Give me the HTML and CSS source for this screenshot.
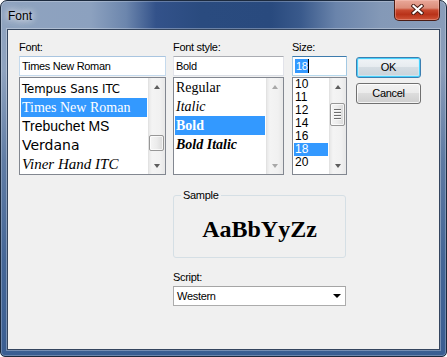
FILE: index.html
```html
<!DOCTYPE html>
<html>
<head>
<meta charset="utf-8">
<link rel="stylesheet" href="styles.css">
</head>
<body>
<div class="window">
  <div class="titlebar">
    <span class="title">Font</span>
    <div class="close">
      <svg width="13" height="11" viewBox="0 0 13 11"><path d="M2.5 2 L10.5 9 M10.5 2 L2.5 9" stroke="#4a1d15" stroke-width="4.2" stroke-linecap="square" fill="none"/><path d="M2.5 2 L10.5 9 M10.5 2 L2.5 9" stroke="#fff" stroke-width="2.2" stroke-linecap="square" fill="none"/></svg>
    </div>
  </div>
  <div class="client">
    <div class="top">
      <div class="col col-font">
        <div class="lbl">Font:</div>
        <div class="input">Times New Roman</div>
        <div class="listbox">
          <div class="items font-items">
            <div class="it f-tempus">Tempus Sans ITC</div>
            <div class="it f-times sel">Times New Roman</div>
            <div class="it f-trebuchet">Trebuchet MS</div>
            <div class="it f-verdana">Verdana</div>
            <div class="it f-viner">Viner Hand ITC</div>
          </div>
          <div class="sb">
            <div class="arr"><span class="tri up"></span></div>
            <div class="track"><div class="thumb thumb-font"></div></div>
            <div class="arr"><span class="tri down"></span></div>
          </div>
        </div>
      </div>
      <div class="col col-style">
        <div class="lbl">Font style:</div>
        <div class="input">Bold</div>
        <div class="listbox">
          <div class="items style-items">
            <div class="it s-reg">Regular</div>
            <div class="it s-it">Italic</div>
            <div class="it s-b sel">Bold</div>
            <div class="it s-bi">Bold Italic</div>
          </div>
          <div class="sb">
            <div class="arr"><span class="tri up dis"></span></div>
            <div class="track"></div>
            <div class="arr"><span class="tri down dis"></span></div>
          </div>
        </div>
      </div>
      <div class="col col-size">
        <div class="lbl">Size:</div>
        <div class="input input-focus"><span class="selected-text">18</span><span class="caret"></span></div>
        <div class="listbox">
          <div class="items size-items">
            <div class="it z">10</div>
            <div class="it z">11</div>
            <div class="it z">12</div>
            <div class="it z">14</div>
            <div class="it z">16</div>
            <div class="it z sel">18</div>
            <div class="it z">20</div>
          </div>
          <div class="sb">
            <div class="arr"><span class="tri up"></span></div>
            <div class="track"><div class="thumb thumb-size"><i></i><i></i><i></i><i></i></div></div>
            <div class="arr"><span class="tri down"></span></div>
          </div>
        </div>
      </div>
      <div class="buttons">
        <div class="btn btn-default">OK</div>
        <div class="btn">Cancel</div>
      </div>
    </div>
    <div class="bottom">
      <fieldset class="sample">
        <legend>Sample</legend>
        <div class="sample-text">AaBbYyZz</div>
      </fieldset>
      <div class="lbl script-lbl">Script:</div>
      <div class="select">Western<span class="drop"></span></div>
    </div>
  </div>
</div>
</body>
</html>
```
FILE: styles.css
```css
html, body {
  margin: 0;
  padding: 0;
  background: #ffffff;
}
body {
  font-family: "Liberation Sans", Arial, sans-serif;
  font-size: 11px;
  letter-spacing: -0.3px;
  color: #000;
}
.window {
  width: 447px;
  height: 357px;
  box-sizing: border-box;
  border: 1px solid #1c2a3e;
  border-radius: 7px 7px 5px 5px;
  display: flex;
  flex-direction: column;
  background:
    linear-gradient(to bottom, rgba(60,96,146,0) 0px, rgba(60,96,146,0) 70px, rgba(58,93,143,0.55) 160px, rgba(56,92,144,0.85) 260px, #3a5e92 356px),
    linear-gradient(90deg, #8fa3bf 0px, #8ca1bf 90px, #6c86ad 125px, #33528a 155px, #2a4b7f 200px, #294a7e 270px, #3a5a8c 300px, #6a84ab 335px, #8499b7 380px, #8a9dba 447px);
  box-shadow: inset 0 0 0 1px rgba(255,255,255,0.25);
}
.titlebar {
  height: 28px;
  display: flex;
  align-items: flex-start;
}
.title {
  margin: 8px 0 0 7px;
  font-size: 12px;
  letter-spacing: 0;
  line-height: 14px;
  color: #000;
  text-shadow: 0 0 6px #fff, 0 0 10px rgba(255,255,255,0.8), 0 0 14px rgba(255,255,255,0.6);
}
.close {
  margin-left: auto;
  margin-right: 6px;
  margin-top: -1px;
  width: 46px;
  height: 21px;
  box-sizing: border-box;
  border: 1px solid #4b1c14;
  border-top: 0;
  border-radius: 0 0 5px 5px;
  background: linear-gradient(to bottom, #e9a899 0%, #dc8d7a 40%, #c8492f 50%, #b93219 72%, #cf5438 100%);
  box-shadow: inset 0 0 0 1px rgba(255,210,200,0.35);
  display: flex;
  align-items: center;
  justify-content: center;
}
.close svg { display: block; margin-top: -1px; }
.client {
  flex: 1;
  margin: 0 6px 6px 6px;
  border: 1px solid #34455e;
  background: #f0f0f0;
  box-shadow: 0 0 0 1px rgba(255,255,255,0.3);
}
.top {
  display: flex;
  padding: 10px 0 0 11px;
}
.col { display: flex; flex-direction: column; }
.col-font { width: 147px; margin-right: 7px; }
.col-style { width: 111px; margin-right: 8px; }
.col-size { width: 55px; margin-right: 9px; }
.lbl {
  line-height: 15px;
  height: 15px;
  margin-bottom: 1px;
  white-space: nowrap;
}
.input {
  height: 20px;
  box-sizing: border-box;
  background: #fff;
  border: 1px solid #dbdfe6;
  border-top-color: #abadb3;
  border-left-color: #e2e3ea;
  border-right-color: #e2e3ea;
  line-height: 18px;
  padding-left: 2px;
  white-space: nowrap;
  display: flex;
  align-items: center;
}
.col-font .input { border-color: #a9c5e0 #c5daed #c5daed #c5daed; }
.input-focus { border-color: #3d7bad #a4c9e3 #b7d9ed #a4c9e3; }
.selected-text {
  background: #3399ff;
  color: #fff;
  line-height: 14px;
  padding: 0 0 0 1px;
}
.caret {
  width: 1px;
  height: 14px;
  background: #000;
}
.listbox {
  margin-top: 1px;
  height: 98px;
  box-sizing: border-box;
  border: 1px solid #828790;
  background: #fff;
  display: flex;
  overflow: hidden;
}
.items {
  flex: 1;
  padding: 0 1px 0 1px;
  overflow: hidden;
}
.font-items { padding-top: 1px; }
.it {
  height: 19px;
  line-height: 19px;
  white-space: nowrap;
  padding-left: 1px;
  color: #000;
  letter-spacing: 0;
  overflow: hidden;
}
.it.sel { background: #3399ff; color: #fff; }
.f-tempus { font-family: "DejaVu Sans Condensed", "DejaVu Sans", sans-serif; font-size: 13px; }
.f-times { font-family: "Liberation Serif", serif; font-size: 14px; }
.f-trebuchet { font-family: "Liberation Sans", sans-serif; font-size: 14px; }
.f-verdana { font-family: "DejaVu Sans", sans-serif; font-size: 14px; }
.f-viner { font-family: "Liberation Serif", serif; font-style: italic; font-size: 15px; }
.style-items .it { font-family: "Liberation Serif", serif; font-size: 14px; }
.s-it { font-style: italic; }
.s-b { font-weight: bold; }
.s-bi { font-weight: bold; font-style: italic; }
.size-items .it.z {
  height: 13px;
  line-height: 13px;
  font-size: 12px;
}
.sb {
  width: 17px;
  flex: none;
  display: flex;
  flex-direction: column;
  background: linear-gradient(90deg, #dcdcdc 0px, #e8e8e8 1px, #f4f4f4 4px, #f1f1f1 12px, #e9e9e9 16px);
}
.arr {
  height: 17px;
  flex: none;
  display: flex;
  align-items: center;
  justify-content: center;
}
.track { flex: 1; }
.tri {
  width: 0;
  height: 0;
  border-left: 3.5px solid transparent;
  border-right: 3.5px solid transparent;
}
.tri.up { border-bottom: 4px solid #5d5d5d; }
.tri.down { border-top: 4px solid #5d5d5d; }
.tri.up.dis { border-bottom-color: #a8a8a8; }
.tri.down.dis { border-top-color: #a8a8a8; }
.thumb {
  margin: 0 1px;
  box-sizing: border-box;
  border: 1px solid #979797;
  border-radius: 2px;
  background: linear-gradient(90deg, #f5f5f5 0%, #ececec 50%, #dadada 100%);
  box-shadow: inset 0 0 0 1px rgba(255,255,255,0.7);
}
.thumb-font { margin-top: 40px; height: 16px; }
.thumb-size {
  margin-top: 8px;
  height: 23px;
  display: flex;
  flex-direction: column;
  align-items: center;
  justify-content: center;
  gap: 1px;
}
.thumb-size i {
  display: block;
  width: 7px;
  height: 1px;
  background: #6e6e6e;
  border-bottom: 1px solid #fafafa;
}
.buttons {
  width: 65px;
  padding-top: 17px;
  display: flex;
  flex-direction: column;
  gap: 5px;
}
.btn {
  height: 21px;
  box-sizing: border-box;
  border: 1px solid #707070;
  border-radius: 3px;
  background: linear-gradient(to bottom, #f2f2f2 0%, #ebebeb 49%, #dddddd 50%, #cfcfcf 100%);
  box-shadow: inset 0 0 0 1px rgba(255,255,255,0.75);
  display: flex;
  align-items: center;
  justify-content: center;
  line-height: 19px;
}
.btn-default {
  border-color: #3c7fb1;
  box-shadow: inset 0 0 0 1px #48d2fd, inset 0 0 0 2px rgba(200,240,255,0.6);
  background: linear-gradient(to bottom, #f0f4f7 0%, #e6ebef 49%, #d5dde3 50%, #c9d2d9 100%);
}
.bottom {
  padding: 13px 0 0 165px;
}
.sample {
  margin: 0;
  padding: 0;
  width: 173px;
  box-sizing: border-box;
  border: 1px solid #d5dfe5;
  border-radius: 3px;
  min-width: 0;
}
.sample legend {
  margin-left: 7px;
  padding: 0 2px;
  line-height: 15px;
  height: 15px;
}
.sample-text {
  height: 54px;
  box-sizing: border-box;
  padding-top: 13px;
  line-height: 27px;
  text-align: center;
  font-family: "Liberation Serif", serif;
  font-weight: bold;
  font-size: 24px;
  letter-spacing: 0;
}
.script-lbl { margin-top: 12px; }
.select {
  width: 173px;
  height: 20px;
  box-sizing: border-box;
  background: #fff;
  border: 1px solid #acacac;
  border-top-color: #a5a5a5;
  display: flex;
  align-items: center;
  padding-left: 3px;
}
.drop {
  margin-left: auto;
  margin-right: 4px;
  width: 0;
  height: 0;
  border-left: 4px solid transparent;
  border-right: 4px solid transparent;
  border-top: 4px solid #000;
}
```
